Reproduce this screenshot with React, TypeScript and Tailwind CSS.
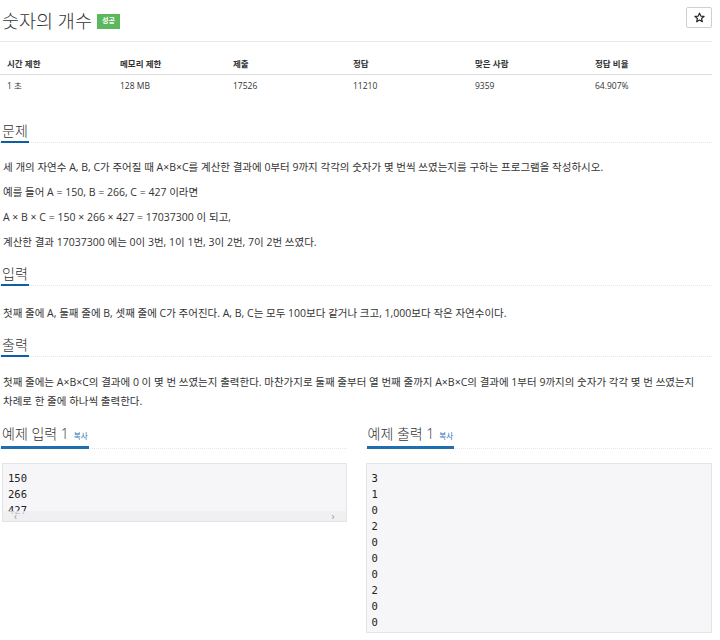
import React from "react";

const FONT = '"Open Sans", "Noto Sans CJK KR", sans-serif';
const MONO = '"DejaVu Sans Mono", "Liberation Mono", monospace';

function SectionHeading({ children }: { children: React.ReactNode }) {
  return (
    <div className="border-b border-dotted border-[#e6e6e6] pl-px">
      <span className="inline-block border-b-2 border-[#0b5fa5] -mb-px text-[14px] font-light leading-[20px] text-[#333] pl-px pr-px">
        {children}
      </span>
    </div>
  );
}

function SampleHeading({ title }: { title: string }) {
  return (
    <div className="border-b border-dotted border-[#e6e6e6] pl-px">
      <span className="inline-flex items-baseline border-b-[3px] border-[#1f6fb0] -mb-px leading-[20px] text-[#333] pl-px pr-px">
        <span className="text-[14px] font-light">{title}</span>
        <span className="ml-[5px] text-[7.5px] text-[#1f6fb0]">복사</span>
      </span>
    </div>
  );
}

export default function App() {
  const cols = ["시간 제한", "메모리 제한", "제출", "정답", "맞은 사람", "정답 비율"];
  const vals = ["1 초", "128 MB", "17526", "11210", "9359", "64.907%"];
  const out = ["3", "1", "0", "2", "0", "0", "0", "2", "0", "0"];
  return (
    <div className="w-[720px] h-[640px] bg-white overflow-hidden" style={{ fontFamily: FONT }}>
      <div className="w-[712px]">
        {/* header */}
        <div className="flex items-start justify-between pt-[8px] pb-[7px] border-b border-[#eaeaea]">
          <div className="flex items-center pl-[2px]">
            <span className="text-[18.5px] font-light leading-[26px] text-[#333]">숫자의 개수</span>
            <span className="ml-[5px] mt-px inline-flex items-center justify-center w-[23px] h-[15px] bg-[#5cb85c] text-white text-[7px] font-bold">
              성공
            </span>
          </div>
          <button className="-mt-px w-[26px] h-[21px] border border-[#cfcfcf] rounded-[2px] bg-white flex items-center justify-center">
            <svg width="11" height="11" viewBox="0 0 24 24" fill="none" stroke="#222" strokeWidth="2.6" strokeLinejoin="round">
              <polygon points="12,2.5 14.9,9 22,9.6 16.6,14.3 18.2,21.3 12,17.6 5.8,21.3 7.4,14.3 2,9.6 9.1,9" />
            </svg>
          </button>
        </div>

        {/* table */}
        <div className="mt-[12px] text-[8.5px] text-[#333]">
          <div className="grid grid-cols-[113px_113px_120px_122px_120px_1fr] h-[21px] items-center border-b border-[#dddddd] font-bold">
            {cols.map((c) => (
              <div key={c} className="pl-[7px]">{c}</div>
            ))}
          </div>
          <div className="grid grid-cols-[113px_113px_120px_122px_120px_1fr] h-[22px] items-center">
            {vals.map((c) => (
              <div key={c} className="pl-[7px]">{c}</div>
            ))}
          </div>
        </div>

        {/* 문제 */}
        <div className="mt-[21px]">
          <SectionHeading>문제</SectionHeading>
        </div>
        <div className="mt-[15px] pl-[3px] text-[10.5px] leading-[19px] text-[#333]">
          <p className="mb-[6px]">세 개의 자연수 A, B, C가 주어질 때 A×B×C를 계산한 결과에 0부터 9까지 각각의 숫자가 몇 번씩 쓰였는지를 구하는 프로그램을 작성하시오.</p>
          <p className="mb-[6px]">예를 들어 A = 150, B = 266, C = 427 이라면</p>
          <p className="mb-[6px]">A × B × C = 150 × 266 × 427 = 17037300 이 되고,</p>
          <p className="mb-[6px]">계산한 결과 17037300 에는 0이 3번, 1이 1번, 3이 2번, 7이 2번 쓰였다.</p>
        </div>

        {/* 입력 */}
        <div className="mt-[9px]">
          <SectionHeading>입력</SectionHeading>
        </div>
        <div className="mt-[18px] pl-[3px] text-[10.5px] leading-[19px] text-[#333]">
          <p className="mb-[6px]">첫째 줄에 A, 둘째 줄에 B, 셋째 줄에 C가 주어진다. A, B, C는 모두 100보다 같거나 크고, 1,000보다 작은 자연수이다.</p>
        </div>

        {/* 출력 */}
        <div className="mt-[9px]">
          <SectionHeading>출력</SectionHeading>
        </div>
        <div className="mt-[16px] pl-[3px] pr-[6px] text-[10.5px] leading-[19px] text-[#333]">
          <p className="mb-[6px]">첫째 줄에는 A×B×C의 결과에 0 이 몇 번 쓰였는지 출력한다. 마찬가지로 둘째 줄부터 열 번째 줄까지 A×B×C의 결과에 1부터 9까지의 숫자가 각각 몇 번 쓰였는지 차례로 한 줄에 하나씩 출력한다.</p>
        </div>

        {/* samples */}
        <div className="mt-[10px] grid grid-cols-2 gap-[19px]">
          <div>
            <SampleHeading title="예제 입력 1" />
            <div className="relative mt-[14px] ml-[2px] h-[59px] overflow-hidden border border-[#e4e4e4] bg-[#f6f6f8]">
              <div className="pt-[6px] pl-[5px] text-[10.5px] leading-[16px] text-[#222]" style={{ fontFamily: MONO }}>
                <div>150</div>
                <div>266</div>
                <div>427</div>
              </div>
              <div className="absolute left-0 right-0 bottom-0 h-[10px] bg-[#efeff1]/80 flex items-center justify-between px-[11px] text-[10px] leading-none text-[#999]">
                <span>‹</span>
                <span>›</span>
              </div>
            </div>
          </div>
          <div>
            <SampleHeading title="예제 출력 1" />
            <div className="mt-[14px] h-[170px] border border-[#e4e4e4] bg-[#f6f6f8]">
              <div className="pt-[6px] pl-[5px] text-[10.5px] leading-[16px] text-[#222]" style={{ fontFamily: MONO }}>
                {out.map((o, i) => (
                  <div key={i}>{o}</div>
                ))}
              </div>
            </div>
          </div>
        </div>
      </div>
    </div>
  );
}
